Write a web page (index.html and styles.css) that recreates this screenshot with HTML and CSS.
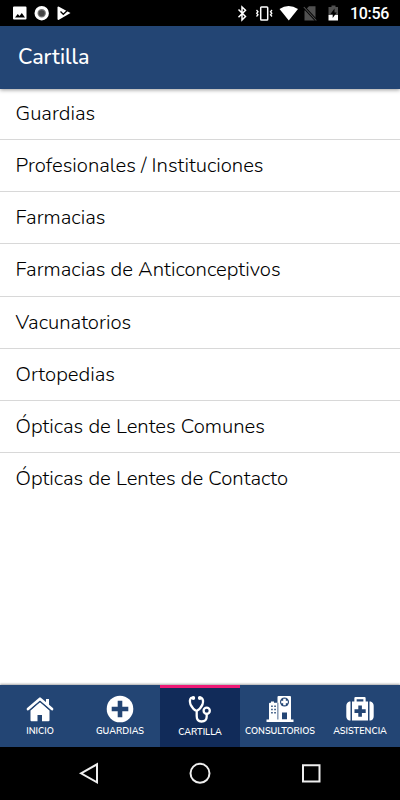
FILE: index.html
```html
<!DOCTYPE html>
<html lang="es">
<head>
<meta charset="utf-8">
<title>Cartilla</title>
<link rel="stylesheet" href="styles.css">
</head>
<body>
<div class="status">
  <svg class="status-icons" width="350" height="26" viewBox="0 0 350 26">
    <path fill="#fff" fill-rule="evenodd" d="M14 6.500h11.500q1 0 1 1V18.500q0 1-1 1H14q-1 0-1-1V7.500q0-1 1-1zM15 17.500h10l-3.200-4.500-2.300 3-1.700-2z"/>
    <circle cx="41.700" cy="13.200" r="5.700" fill="#777" stroke="#fff" stroke-width="3"/>
    <circle cx="41.700" cy="13.200" r="3" fill="#444"/>
    <path fill="#fff" d="M58.500 6.500L70.500 13 58.500 20q-1 0-1-1V7.500q0-1 1-1z"/>
    <path d="M60.500 11.500l2.800 2.800 6.500-6" fill="none" stroke="#000" stroke-width="1.300"/>
    <path d="M66 8.500l6 3.500" stroke="#000" stroke-width="1"/>
    <path d="M238.500 9.500l7 7-3.500 3.500V7l3.500 3.200-7 7" fill="none" stroke="#fff" stroke-width="1.500"/>
    <rect x="260.700" y="7" width="7" height="13" rx=".8" fill="none" stroke="#fff" stroke-width="1.500"/>
    <path d="M256.500 10l1.500 1.700-1.300 1.600 1.300 1.500-1.500 1.700M272 10l-1.500 1.700 1.300 1.600-1.300 1.500 1.500 1.700" fill="none" stroke="#fff" stroke-width="1.300"/>
    <path fill="#fff" d="M279.500 9q9-6 18.500 0l-9.200 11.500z"/>
    <path fill="#505050" d="M309 6.200h6.500V20.500H304.500V10.700z"/>
    <path d="M303.800 7l12.500 13.500" stroke="#000" stroke-width="2.600"/>
    <path d="M303.800 7l12.500 13.500" stroke="#505050" stroke-width="1.100"/>
    <path fill="#505050" d="M331.500 5.500h4V7h2.500v8h-9.500V7h3z"/>
    <path fill="#fff" d="M328.500 15h9.500v5.500h-9.500z"/>
    <path d="M334.500 8.500l-4 5.500h2.200v4l4-5.500h-2.200z" fill="#000"/>
  </svg>
  <span class="clock">10:56</span>
</div>
<header class="header"><h1 class="title">Cartilla</h1></header>
<main class="content">
  <ul class="list">
    <li class="item">Guardias</li>
    <li class="item">Profesionales / Instituciones</li>
    <li class="item">Farmacias</li>
    <li class="item">Farmacias de Anticonceptivos</li>
    <li class="item">Vacunatorios</li>
    <li class="item">Ortopedias</li>
    <li class="item">Ópticas de Lentes Comunes</li>
    <li class="item">Ópticas de Lentes de Contacto</li>
  </ul>
</main>
<nav class="tabs">
  <a class="tab"><svg class="icon" width="30" height="30" viewBox="0 0 30 30"><path d="M3 15L15 4.700 27 15" fill="none" stroke="#fff" stroke-width="2.700" stroke-linecap="round" stroke-linejoin="round"/><path fill="#fff" d="M21 5h3v7l-3-2.500zM5.500 16.500L15 8.200l9.500 8.300v9.700q0 1-1 1H17v-6.200h-4.500v6.200H6.500q-1 0-1-1z"/><path d="M4.800 16.200L15 7.400l10.200 8.800" fill="none" stroke="#234574" stroke-width="1"/></svg><span>INICIO</span></a>
  <a class="tab"><svg class="icon" width="30" height="30" viewBox="0 0 30 30"><circle cx="15" cy="15" r="13.300" fill="#fff"/><path fill="#234574" d="M12.700 6.700h4.600v6h6v4.600h-6v6h-4.600v-6h-6v-4.600h6z"/></svg><span>GUARDIAS</span></a>
  <a class="tab active"><svg class="icon" width="30" height="30" viewBox="0 0 30 30"><g fill="none" stroke="#fff" stroke-linecap="round" stroke-linejoin="round"><path stroke-width="2.300" d="M8.500 2.800H6.200Q4 5 5.500 9.500q2.500 5 6 6.500 4-2 6-6.500 1.500-4.500-1-6.700H14.500M11.700 16v5q0 5.500 4.800 5.500 5.200 0 5.200-5V19"/><circle cx="21.700" cy="15.800" r="3.100" stroke-width="2.300"/></g><circle cx="8.300" cy="3" r="1.900" fill="#fff"/><circle cx="14.800" cy="3" r="1.900" fill="#fff"/></svg><span>CARTILLA</span></a>
  <a class="tab"><svg class="icon" width="30" height="30" viewBox="0 0 30 30"><path fill="#fff" d="M1.500 25.500H4V9.700q0-1 1-1h1V7.500h3v1.200h3.500V3q0-1 1-1H25q1 0 1 1v22.500h2.500V28h-27z"/><path fill="#234574" d="M12.500 8.700h.8v16.800h-.8zM6.200 11.500h1.500V13H6.200zM9.300 11.500h1.500V13H9.300zM6.200 14.800h1.500v1.500H6.200zM9.300 14.800h1.500v1.500H9.300zM6.200 18h1.500v1.500H6.200zM9.300 18h1.500v1.500H9.300zM17 18.500h5v6.700h-5z"/><circle cx="19.500" cy="8" r="4.500" fill="#234574"/><path d="M19.500 4.700v6.600M16.200 8h6.600" stroke="#fff" stroke-width="2.600"/></svg><span>CONSULTORIOS</span></a>
  <a class="tab"><svg class="icon" width="30" height="30" viewBox="0 0 30 30"><path d="M10.500 8V4.200h9V8" fill="none" stroke="#fff" stroke-width="2.300" stroke-linejoin="round"/><path fill="#fff" d="M7 7.500h16v19H7zM5.500 7.500v19H4.300q-3-1-3-4.300V12q0-3.500 3-4.500zM24.500 7.500v19h1.200q3-1 3-4.300V12q0-3.500-3-4.500z"/><path fill="#234574" d="M13.300 11.500h3.600v3.800h3.800v3.600h-3.800v3.800h-3.600v-3.800H9.500v-3.600h3.800z"/></svg><span>ASISTENCIA</span></a>
</nav>
<footer class="system"><svg width="400" height="53" viewBox="0 0 400 53" fill="none" stroke="#eee" stroke-width="2"><path d="M81 26.300L97 17.300v18z"/><circle cx="200" cy="26.300" r="9.500"/><path d="M303 18.200h16.500v16.300H303z"/></svg></footer>
</body>
</html>
```
FILE: styles.css
```css
* { box-sizing: border-box; }
body {
  margin: 0;
  width: 400px;
  height: 800px;
  display: flex;
  flex-direction: column;
  overflow: hidden;
  background: #fff;
  font-family: Nunito, Lato, sans-serif;
}
.status { height: 26px; flex: none; display: flex; background: #000; color: #fff; }
.status-icons { flex: none; }
.clock { font: 500 16px/28px Roboto, sans-serif; letter-spacing: -0.3px; }
.header {
  height: 63px;
  flex: none;
  background: #234574;
  box-shadow: 0 1px 4px rgba(0,0,0,.4);
  z-index: 1;
}
.title { margin: 0; padding-left: 18px; color: #fff; font-size: 21.500px; font-weight: 500; line-height: 62px; }
.content { flex: 1; }
.list { margin: -1.200px 0 0; padding: 0; list-style: none; }
.item {
  height: 52.200px;
  padding-left: 15.500px;
  border-bottom: 1px solid #d8d8d8;
  color: #000;
  font-size: 20.300px;
  font-weight: 300;
  line-height: 51.500px;
  white-space: nowrap;
}
.item:last-child { border-bottom: 0; }
.tabs { height: 62px; flex: none; display: grid; grid-template-columns: repeat(5, 80px); background: #234574; box-shadow: 0 -1px 2px rgba(0,0,0,.35); }
.tab {
  display: flex;
  flex-direction: column;
  align-items: center;
  padding-top: 9px;
  color: #fff;
  font-size: 9.200px;
  font-weight: 600;
  line-height: 15px;
}
.icon { flex: none; }
.active { background: #112b59; border-top: 3px solid #ee1976; padding-top: 7px; }
.system { height: 53px; flex: none; background: #000; }
.system svg { display: block; }
```
